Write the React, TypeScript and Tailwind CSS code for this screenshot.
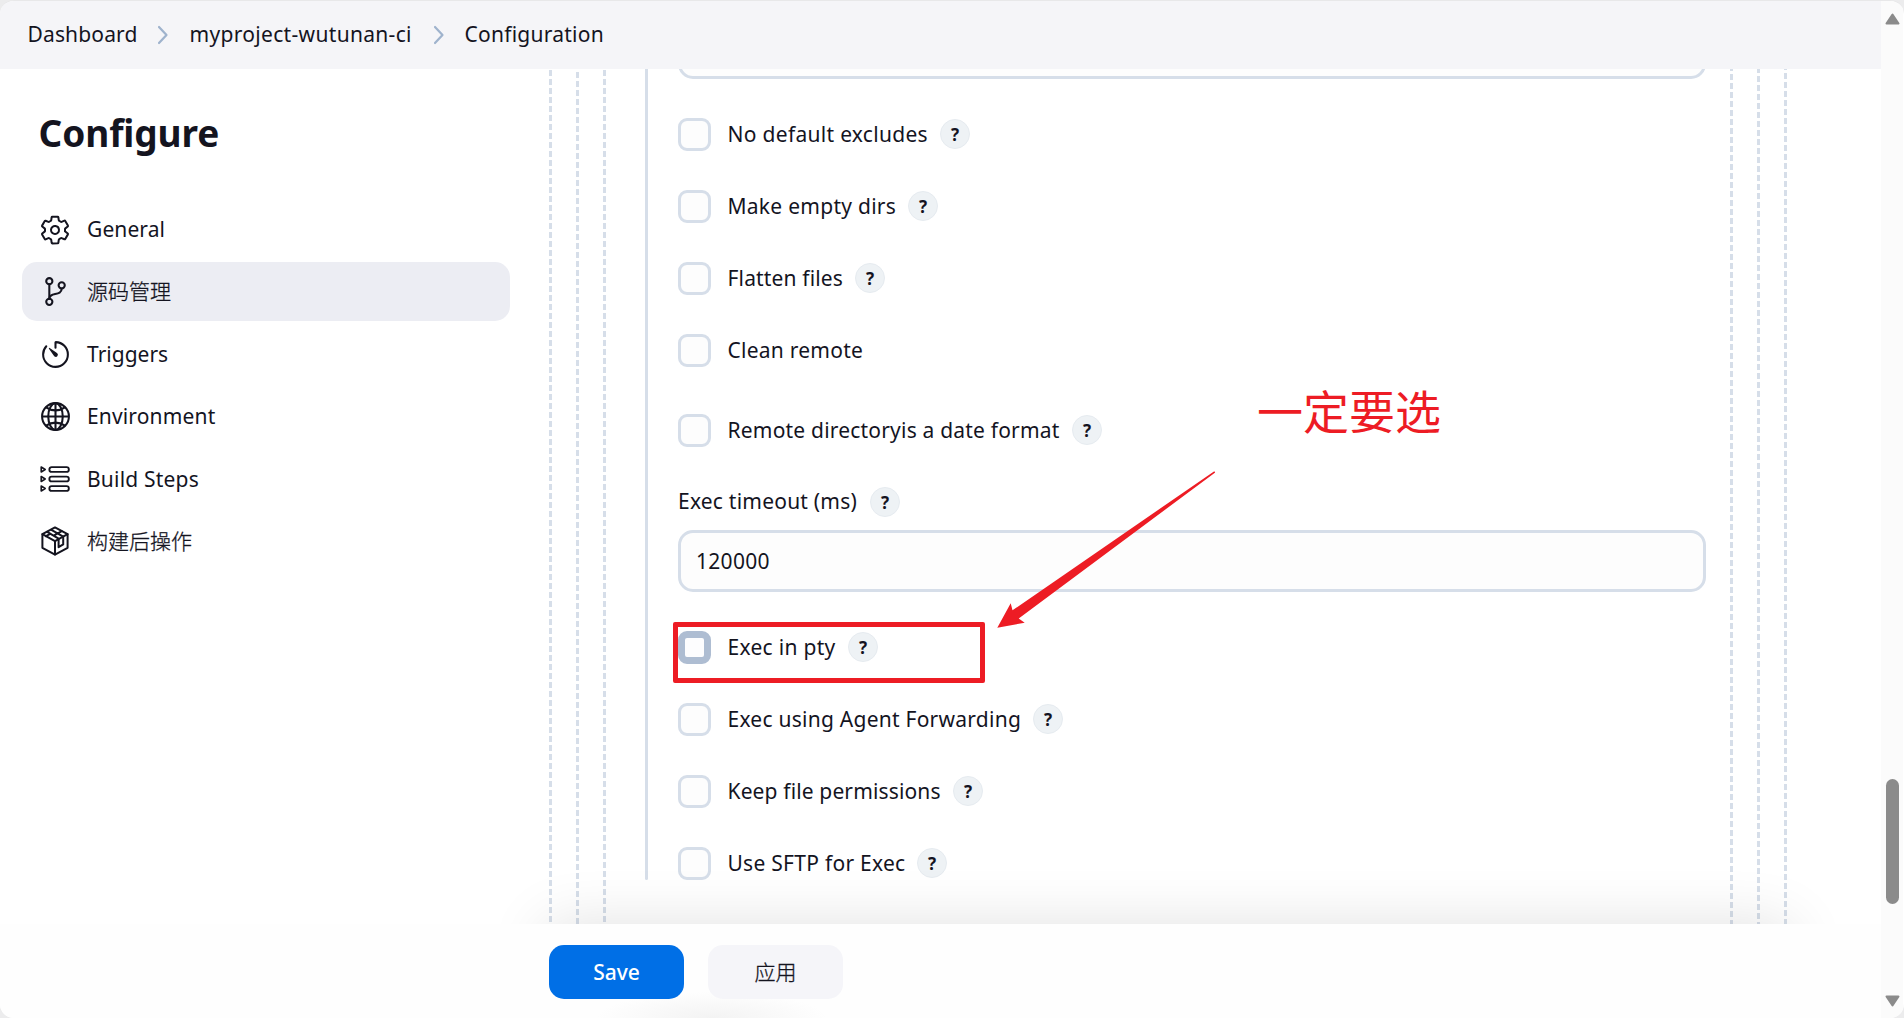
import type { ReactNode } from "react";
import {
  IoSettingsOutline,
  IoGitBranchOutline,
  IoTimerOutline,
  IoGlobeOutline,
} from "react-icons/io5";

function StepsIcon() {
  return (
    <svg width="30" height="26" viewBox="0 0 30 26" fill="none" stroke="currentColor" strokeWidth="1.6" strokeLinejoin="round">
      {[3.5, 13, 22.5].map((y) => (
        <g key={y}>
          <path d={`M1.2 ${y - 2.5}v5l4-2.5z`} />
          <rect x="9.4" y={y - 2.4} width="19.4" height="4.8" rx="2.2" strokeWidth="1.9" />
        </g>
      ))}
    </svg>
  );
}

function PackageIcon() {
  return (
    <svg width="30" height="30" viewBox="0 0 30 30" fill="none" stroke="currentColor" strokeWidth="2" strokeLinejoin="round" strokeLinecap="round">
      <path d="M15 1.4 27.6 8.2v13.6L15 28.6 2.4 21.8V8.2z" />
      <path d="M2.4 8.2 15 15.2l12.6-7M15 15.2v13.4" />
      <path d="M7.2 5.8 18.6 12.6v8.6l4.6-2.8v-7.8L11.4 3.8M6 10.2l4.6-2.5M13.6 9.6l8.2-4.4" />
    </svg>
  );
}

type NavItem = { label: string; icon: ReactNode; text: string; active?: boolean };

const nav: NavItem[] = [
  { label: "General", icon: <IoSettingsOutline size={32} />, text: "pt-px tracking-[0.1px]" },
  { label: "源码管理", icon: <IoGitBranchOutline size={33} />, text: "pb-[2px] font-['Noto_Sans_CJK_SC',sans-serif] font-light [-webkit-text-stroke:0.3px]", active: true },
  { label: "Triggers", icon: <IoTimerOutline size={33} />, text: "pt-px" },
  { label: "Environment", icon: <IoGlobeOutline size={33} />, text: "pt-px tracking-[0.15px]" },
  { label: "Build Steps", icon: <StepsIcon />, text: "pt-px tracking-[0.2px]" },
  { label: "构建后操作", icon: <PackageIcon />, text: "pb-px font-['Noto_Sans_CJK_SC',sans-serif] font-light [-webkit-text-stroke:0.3px]" },
];

function Help() {
  return (
    <span className="-mt-px flex size-[30px] shrink-0 items-center justify-center rounded-full border border-[#e6ebf0] bg-[#eef2f5] pt-px text-[17px] font-bold leading-none">
      ?
    </span>
  );
}

function Check({ label, box, help = true, focused, className }: { label: string; box: string; help?: boolean; focused?: boolean; className?: string }) {
  return (
    <div className={`flex h-[33px] items-center ${className ?? ""}`}>
      <span
        className={
          focused
            ? "size-[33px] shrink-0 rounded-[9px] border-[7px] border-[#aebdd2] bg-[#fdfdfe]"
            : "size-[33px] shrink-0 rounded-[9px] border-[3px] border-[#d6dee9] bg-[#fdfdfd]"
        }
      />
      <span className={`ml-4 shrink-0 whitespace-nowrap pb-px pl-[0.5px] leading-8 ${box}`}>{label}</span>
      {help && <Help />}
    </div>
  );
}

function Dashes({ className }: { className: string }) {
  return (
    <span
      className={`w-[3px] shrink-0 bg-[linear-gradient(to_bottom,#d6dee9_6px,transparent_6px)] bg-[length:3px_9px] ${className}`}
    />
  );
}

function Chevron() {
  return (
    <svg width="12" height="20" viewBox="0 0 12 20" fill="none" stroke="#9fb3cd" strokeWidth="2.2" strokeLinecap="round" strokeLinejoin="round">
      <path d="M2 2l7.5 8L2 18" />
    </svg>
  );
}

export default function App() {
  return (
    <div className="h-[1018px] w-full bg-[#ececed] font-['Noto_Sans','Noto_Sans_CJK_SC',sans-serif] text-[21px] text-[#14141f]">
      <div className="flex h-full w-full overflow-hidden rounded-[14px] border-t border-[#e8e8e9] bg-white">
        <div className="flex w-[1881px] flex-col">
          <header className="flex h-[68px] shrink-0 items-center bg-[#f5f5f8] pl-[27.5px]">
            <span className="w-[129.5px] tracking-[0.15px]">Dashboard</span>
            <Chevron />
            <span className="ml-[20.5px] w-[243.5px] tracking-[0.32px]">myproject-wutunan-ci</span>
            <Chevron />
            <span className="ml-[19.5px] tracking-[0.25px]">Configuration</span>
          </header>

          <div className="relative flex h-[855px] shrink-0 overflow-hidden">
            <aside className="flex w-[549px] shrink-0 flex-col pl-[22px]">
              <h1 className="mt-[39px] pl-[16.5px] text-[37px] font-bold leading-[50px] tracking-[-0.1px]">Configure</h1>
              <nav className="mt-[42px] flex w-[488px] flex-col gap-[3.4px]">
                {nav.map((n) => (
                  <div
                    key={n.label}
                    className={`flex h-[59px] items-center rounded-[15px] ${n.active ? "bg-[#ecedf3]" : ""}`}
                  >
                    <span className="ml-4 flex w-[34px] justify-center">{n.icon}</span>
                    <span className={`ml-[15px] ${n.text}`}>{n.label}</span>
                  </div>
                ))}
              </nav>
            </aside>

            <main className="flex shrink-0">
              <div className="flex gap-6">
                <Dashes className="[background-position:0_1px]" />
                <Dashes className="[background-position:0_3px]" />
                <Dashes className="[background-position:0_1px]" />
              </div>
              <div className="ml-[39px] h-[811px] w-[3px] rounded-b-[2px] bg-[#d6dee9]" />
              <div className="ml-[30px] flex w-[1028px] flex-col">
                <div className="-mt-[50px] h-[60px] shrink-0 rounded-[15px] border-[3px] border-[#d6dee9] bg-[#fdfdfd]" />
                <Check className="mt-[39px]" label="No default excludes" box="w-[213px] tracking-[0.3px]" />
                <Check className="mt-[39px]" label="Make empty dirs" box="w-[181px] tracking-[0.27px]" />
                <Check className="mt-[39px]" label="Flatten files" box="w-[128px] tracking-[0.16px]" />
                <Check className="mt-[39px]" label="Clean remote" box="tracking-[0.25px]" help={false} />
                <Check className="mt-[47px]" label="Remote directoryis a date format" box="w-[345px] tracking-[0.2px]" />
                <div className="mt-10 flex h-[31px] items-center">
                  <span className="w-[192px] pb-px tracking-[0.22px]">Exec timeout (ms)</span>
                  <Help />
                </div>
                <div className="mt-3 flex h-[62px] items-center rounded-[15px] border-[3px] border-[#d6dee9] bg-[#fdfdfd] pl-[15px] pt-px tracking-[0.3px]">
                  120000
                </div>
                <Check className="mt-[39px]" label="Exec in pty" box="w-[121px] tracking-[0.3px]" focused />
                <Check className="mt-[39px]" label="Exec using Agent Forwarding" box="w-[306px] tracking-[0.25px]" />
                <Check className="mt-[39px]" label="Keep file permissions" box="w-[226px] tracking-[0.14px]" />
                <Check className="mt-[39px]" label="Use SFTP for Exec" box="w-[190px] tracking-[0.27px]" />
              </div>
              <div className="ml-6 flex gap-6">
                <Dashes className="[background-position:0_5px]" />
                <Dashes className="[background-position:0_7px]" />
                <Dashes className="[background-position:0_4px]" />
              </div>
            </main>

            {/* Shadow cast upward by the sticky action bar */}
            <div className="absolute -bottom-[94px] left-[545px] h-[94px] w-[1246px] shadow-[0_0_60px_rgba(0,0,0,0.12)]" />
          </div>

          <footer className="flex grow items-start bg-[radial-gradient(ellipse_115px_26px_at_712px_100%,#f3f3f3,#fefefe)] pl-[549px] pt-[21px]">
            <button className="h-[54px] w-[135px] rounded-[15px] bg-[#006fe6] pt-px font-medium text-white">Save</button>
            <button className="ml-6 h-[54px] w-[135px] rounded-[15px] bg-[#f5f5f9] pb-px font-['Noto_Sans_CJK_SC',sans-serif] font-light [-webkit-text-stroke:0.3px]">应用</button>
          </footer>
        </div>

        <div className="flex w-[22px] flex-col items-center bg-[#fbfbfb] pb-[11px] pl-px pt-3">
          <svg width="15" height="12" viewBox="0 0 15 12" fill="#8b8b8b" stroke="#8b8b8b" strokeWidth="2" strokeLinejoin="round">
            <path d="M7.5 1.5 13.5 10.5h-12z" />
          </svg>
          <div className="mt-[754px] h-[125px] w-[13px] rounded-full bg-[#8b8b8b]" />
          <svg className="mt-auto" width="15" height="12" viewBox="0 0 15 12" fill="#8b8b8b" stroke="#8b8b8b" strokeWidth="2" strokeLinejoin="round">
            <path d="M7.5 10.5 13.5 1.5h-12z" />
          </svg>
        </div>
      </div>

      {/* Annotations drawn over the form */}
      <div className="absolute left-[673px] top-[622px] h-[61px] w-[312px] rounded-[2px] border-[5px] border-[#ed1c24]" />
      <svg className="absolute left-[990px] top-[465px]" width="232" height="170" viewBox="990 465 232 170">
        <path d="M997.3 627.8 1010.7 603.3 1012.5 610.3 1214.3 471.2 1215.2 472.5 1018.7 618.4 1024.7 622.7z" fill="#ed1c24" />
      </svg>
      <div className="absolute left-[1257px] top-[377px] whitespace-nowrap font-['Noto_Sans_CJK_SC',sans-serif] text-[46px] leading-[64px] text-[#ed1c24]">
        一定要选
      </div>
    </div>
  );
}
